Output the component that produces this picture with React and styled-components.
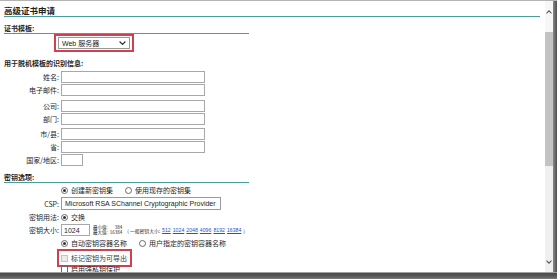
import React from 'react';
import styled, { createGlobalStyle, css } from 'styled-components';

const GlobalStyle = createGlobalStyle`
  html, body {
    margin: 0;
    padding: 0;
    background: #ffffff;
  }
`;

const TEAL = '#4a9d99';
const RED = '#d2404f';

const Frame = styled.div`
  width: 557px;
  height: 279px;
  display: flex;
  flex-direction: column;
  overflow: hidden;
  background: #ffffff;
`;

const Viewport = styled.div`
  flex: 1;
  min-height: 0;
  display: flex;
  border-top: 1px solid #b4b4b4;
`;

const Content = styled.div`
  flex: 1;
  min-width: 0;
  padding: 0 5px 0 4px;
  overflow: hidden;
  display: flex;
  flex-direction: column;
  font-family: "Noto Sans CJK SC", "Liberation Sans", sans-serif;
  font-size: 7px;
  color: #1e1e1e;
`;

const Title = styled.div`
  padding-top: 3px;
  line-height: 12px;
  font-size: 8.5px;
  font-weight: bold;
  border-bottom: 1px solid ${TEAL};
`;

const SectionHead = styled.div`
  width: 245px;
  margin-top: ${p => p.$top}px;
  line-height: 10px;
  font-weight: bold;
  ${p =>
    p.$line &&
    css`
      border-bottom: 1px solid ${TEAL};
    `}
`;

const Highlight = styled.div`
  align-self: flex-start;
  display: flex;
  align-items: center;
  gap: 3px;
  border: 2px solid ${RED};
  padding: ${p => p.$pad};
  margin-left: ${p => p.$left}px;
`;

const Select = styled.div`
  box-sizing: border-box;
  width: ${p => p.$width}px;
  height: ${p => p.$height}px;
  display: flex;
  align-items: center;
  justify-content: space-between;
  padding: 0 3px 0 3px;
  border: 1px solid #9a9a9a;
  background: #ffffff;
  font-family: "Liberation Sans", "Noto Sans CJK SC", sans-serif;
  font-size: 7px;
  color: #222222;
  white-space: nowrap;
`;

const FieldGroup = styled.div`
  display: flex;
  flex-direction: column;
  gap: 1px;
  margin-top: ${p => p.$top}px;
`;

const Row = styled.div`
  display: grid;
  grid-template-columns: 55px 1fr;
  column-gap: 2px;
  align-items: center;
  height: ${p => p.$h || 12}px;
  margin-top: ${p => p.$top || 0}px;
`;

const Label = styled.div`
  text-align: right;
  white-space: nowrap;
  line-height: 10px;
`;

const Field = styled.div`
  display: flex;
  align-items: center;
  min-width: 0;
`;

const TextInput = styled.div`
  box-sizing: border-box;
  width: ${p => p.$width}px;
  height: 12px;
  border: 1px solid #a8a8a8;
  padding: 0 2px;
  display: flex;
  align-items: center;
  font-family: "Liberation Sans", sans-serif;
  font-size: 7px;
`;

const Choice = styled.div`
  display: flex;
  align-items: center;
  gap: 3px;
  margin-right: ${p => p.$after || 0}px;
  white-space: nowrap;
  line-height: 10px;
  color: ${p => (p.$disabled ? '#3a3a3a' : '#1e1e1e')};
`;

const Radio = styled.span`
  box-sizing: border-box;
  width: 7px;
  height: 7px;
  border-radius: 50%;
  border: 1px solid #6a6a6a;
  display: flex;
  align-items: center;
  justify-content: center;
  &::after {
    content: '';
    width: 3px;
    height: 3px;
    border-radius: 50%;
    background: ${p => (p.$on ? '#333333' : 'transparent')};
  }
`;

const Check = styled.span`
  box-sizing: border-box;
  width: 7px;
  height: 7px;
  border: 1px solid ${p => (p.$disabled ? '#c4c4c4' : '#6a6a6a')};
  background: ${p => (p.$disabled ? '#ececec' : '#ffffff')};
`;

const Limits = styled.div`
  display: flex;
  flex-direction: column;
  margin-left: 3px;
  font-size: 4.5px;
  line-height: 5px;
`;

const LimitLine = styled.div`
  display: flex;
  justify-content: space-between;
  gap: 2px;
  white-space: nowrap;
`;

const Common = styled.div`
  margin-left: 5px;
  display: flex;
  align-items: center;
  gap: 2px;
  font-size: 4.8px;
  white-space: nowrap;
`;

const SizeLink = styled.a`
  color: #2e4fc4;
  text-decoration: underline;
  font-family: "Liberation Sans", sans-serif;
  font-size: 5.2px;
`;

const Scrollbar = styled.div`
  width: 8px;
  display: flex;
  flex-direction: column;
  background: #f0f0f0;
`;

const ScrollButton = styled.div`
  height: ${p => p.$h}px;
  display: flex;
  justify-content: center;
  align-items: ${p => (p.$down ? 'flex-end' : 'flex-start')};
  padding: ${p => (p.$down ? '0 0 8px' : '9px 0 0')};
  box-sizing: border-box;
  background: ${p => (p.$down ? '#f0f0f0' : '#f7f7f7')};
`;

const Thumb = styled.div`
  height: 134px;
  background: #c3c3c3;
`;

const Track = styled.div`
  flex: 1;
`;

const Edge = styled.div`
  width: 4px;
  background: linear-gradient(90deg, #8a8a8a, #4e4e4e);
`;

const BottomFrame = styled.div`
  height: 6px;
  border-top: 1px solid #a0a0a0;
  background: linear-gradient(#4a4a4a, #5c5c5c 60%, #7c7c7c);
`;

const Chevron = ({ up, w = 7, h = 4, color = '#333' }) => (
  <svg width={w} height={h} viewBox="0 0 7 4">
    <path
      d={up ? 'M0.6 3.5 L3.5 0.6 L6.4 3.5' : 'M0.6 0.5 L3.5 3.4 L6.4 0.5'}
      fill="none"
      stroke={color}
      strokeWidth="1.2"
    />
  </svg>
);

const identity = [
  [
    ['姓名:', 144],
    ['电子邮件:', 144]
  ],
  [
    ['公司:', 144],
    ['部门:', 144]
  ],
  [
    ['市/县:', 144],
    ['省:', 144],
    ['国家/地区:', 22]
  ]
];

const sizes = ['512', '1024', '2048', '4096', '8192', '16384'];

export default function App() {
  return (
    <>
      <GlobalStyle />
      <Frame>
        <Viewport>
          <Content>
            <Title>高级证书申请</Title>

            <SectionHead $top={6} $line>证书模板:</SectionHead>
            <Highlight $left={50} $pad="1px 2px">
              <Select $width={72} $height={12}>
                Web 服务器
                <Chevron />
              </Select>
            </Highlight>

            <SectionHead $top={6}>用于脱机模板的识别信息:</SectionHead>
            {identity.map((group, i) => (
              <FieldGroup key={i} $top={i === 0 ? 3 : i === 1 ? 4 : 3}>
                {group.map(([label, width]) => (
                  <Row key={label}>
                    <Label>{label}</Label>
                    <Field>
                      <TextInput $width={width} />
                    </Field>
                  </Row>
                ))}
              </FieldGroup>
            ))}

            <SectionHead $top={6} $line>密钥选项:</SectionHead>
            <Row $h={10} $top={2}>
              <span />
              <Field>
                <Choice $after={12}>
                  <Radio $on />
                  创建新密钥集
                </Choice>
                <Choice>
                  <Radio />
                  使用现存的密钥集
                </Choice>
              </Field>
            </Row>
            <Row $h={13} $top={2}>
              <Label>CSP:</Label>
              <Field>
                <Select $width={160} $height={13}>
                  Microsoft RSA SChannel Cryptographic Provider
                  <Chevron />
                </Select>
              </Field>
            </Row>
            <Row $h={12} $top={2}>
              <Label>密钥用法:</Label>
              <Field>
                <Choice>
                  <Radio $on />
                  交换
                </Choice>
              </Field>
            </Row>
            <Row $h={12} $top={2}>
              <Label>密钥大小:</Label>
              <Field>
                <TextInput $width={29}>1024</TextInput>
                <Limits>
                  <LimitLine>
                    <span>最小值:</span>
                    <span>384</span>
                  </LimitLine>
                  <LimitLine>
                    <span>最大值:</span>
                    <span>16384</span>
                  </LimitLine>
                </Limits>
                <Common>
                  <span>( 一般密钥大小:</span>
                  {sizes.map(s => (
                    <SizeLink key={s} href="#">
                      {s}
                    </SizeLink>
                  ))}
                  <span>)</span>
                </Common>
              </Field>
            </Row>
            <Row $h={10} $top={2}>
              <span />
              <Field>
                <Choice $after={12}>
                  <Radio $on />
                  自动密钥容器名称
                </Choice>
                <Choice>
                  <Radio />
                  用户指定的密钥容器名称
                </Choice>
              </Field>
            </Row>
            <Row $h={15} $top={1}>
              <span />
              <Field>
                <Highlight $left={-4} $pad="2px 3px 2px 2px">
                  <Choice $disabled>
                    <Check $disabled />
                    标记密钥为可导出
                  </Choice>
                </Highlight>
              </Field>
            </Row>
            <Row $h={10} $top={0}>
              <span />
              <Field>
                <Choice>
                  <Check />
                  启用强私钥保护
                </Choice>
              </Field>
            </Row>
          </Content>
          <Scrollbar>
            <ScrollButton $h={31}>
              <Chevron up w={6} h={4} color="#555" />
            </ScrollButton>
            <Thumb />
            <Track />
            <ScrollButton $h={20} $down>
              <Chevron w={6} h={4} color="#555" />
            </ScrollButton>
          </Scrollbar>
          <Edge />
        </Viewport>
        <BottomFrame />
      </Frame>
    </>
  );
}
